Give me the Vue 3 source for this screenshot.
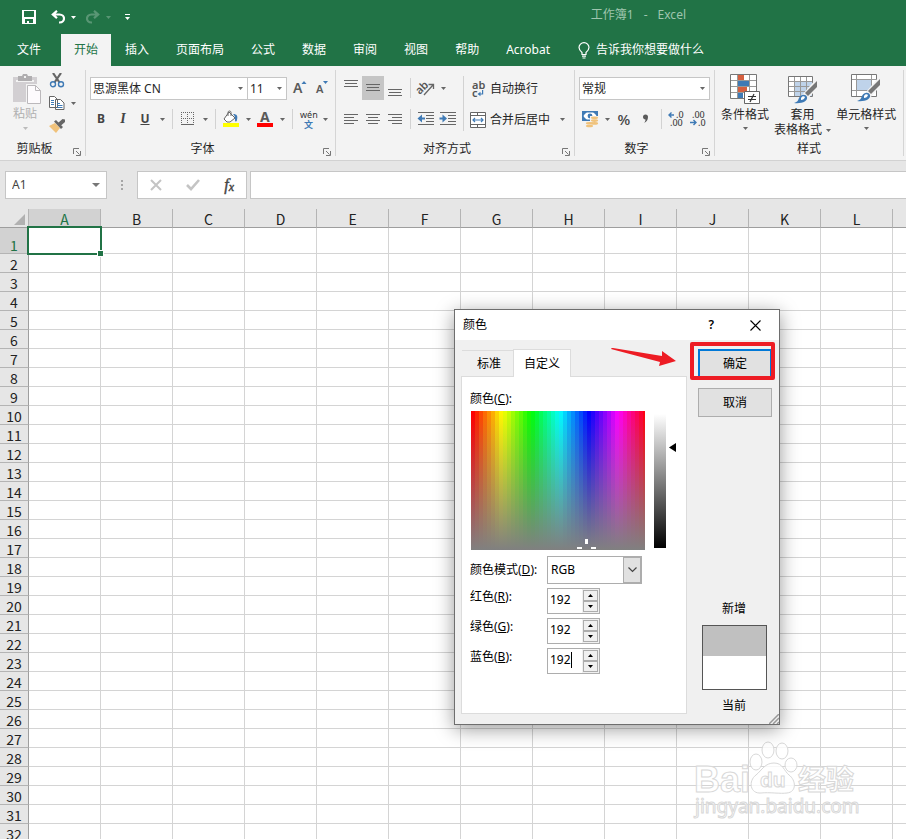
<script setup>
import { ref } from 'vue'

const tabs = ['插入', '页面布局', '公式', '数据', '审阅', '视图', '帮助', 'Acrobat']
const columns = [...'ABCDEFGHIJKL'.split(''), '']
const rows = Array.from({ length: 32 }, (_, i) => i + 1)

const vertical = [
  { name: '顶端对齐', y: 4 },
  { name: '垂直居中', y: 8, on: true },
  { name: '底端对齐', y: 13 },
]
const horizontal = [
  { name: '左对齐', x: [4, 4, 4, 4] },
  { name: '居中', x: [4, 6, 4, 6] },
  { name: '右对齐', x: [4, 8, 4, 8] },
]

const hues = Array.from({ length: 44 }, (_, i) => ({
  x: i * 4,
  fill: `hsl(${Math.round((i / 43.5) * 360)} 100% 50%)`,
}))

const channels = ref([
  { id: 'red', label: '红色', key: 'R', value: 192 },
  { id: 'green', label: '绿色', key: 'G', value: 192 },
  { id: 'blue', label: '蓝色', key: 'B', value: 192, caret: true },
])
const step = (c, d) => {
  c.value = Math.min(255, Math.max(0, Number(c.value) + d))
}
</script>

<template>
  <div class="app">
    <header class="top">
      <div class="titlebar">
        <button class="plain" aria-label="保存">
          <svg width="14" height="14" viewBox="0 0 14 14"><path fill="#fff" fill-rule="evenodd" d="M0 0h14v14H0zM2 1v6h10V1zM3 9v4h2v-2h2v2h4V9z" /></svg>
        </button>
        <button class="plain undo" aria-label="撤消">
          <svg width="14" height="14" viewBox="0 0 14 14"><path fill="none" stroke="#fff" stroke-width="2.200" d="M6 .8L1.800 4.500 6 8.200M2 4.500h6.500c3 0 4.500 2 4.500 4s-1.500 4-4.500 4H8" /></svg>
        </button>
        <button class="plain c1" aria-label="撤消选项"><svg width="5" height="3"><path fill="#fff" d="M0 0h5L2.500 3z" /></svg></button>
        <button class="plain c2 dim" aria-label="恢复">
          <svg width="14" height="14" viewBox="0 0 14 14"><path fill="none" stroke="#fff" stroke-width="2.200" d="M8 .8l4.200 3.700L8 8.200M12 4.500H5.500C2.500 4.500 1 6.500 1 8.500s1.500 4 4.500 4H6" /></svg>
        </button>
        <button class="plain c1 dim" aria-label="恢复选项"><svg width="5" height="3"><path fill="#fff" d="M0 0h5L2.500 3z" /></svg></button>
        <button class="plain c3" aria-label="自定义快速访问工具栏"><svg width="5" height="6"><path fill="#fff" d="M0 0h5v1H0zM0 3h5L2.500 6z" /></svg></button>
        <h1 class="doc"><span>工作簿1</span><span>-</span><span>Excel</span></h1>
      </div>
      <nav class="tabs">
        <button class="tab file">文件</button>
        <button class="tab active">开始</button>
        <button v-for="t in tabs" :key="t" class="tab">{{ t }}</button>
        <button class="tell">
          <svg width="12" height="17" viewBox="0 0 12 17" fill="none" stroke="#fff" stroke-width="1.200"><path d="M4 12.500v-2C2 8.800 1 7.500 1 5.600a5 5 0 0 1 10 0C11 7.500 10 8.800 8 10.500v2zM4 14.200h4M4.500 16h3" /></svg>
          <span>告诉我你想要做什么</span>
        </button>
      </nav>
    </header>

    <section class="ribbon">
      <div class="group g-clip">
        <div class="clip">
          <button class="paste">
            <svg width="28" height="30" viewBox="0 0 28 30">
              <path fill="#d2cfd2" d="M0 3h24v25H0z" /><path fill="#f3f3f3" d="M3 6h18v2H3z" />
              <path fill="#b0aeb0" d="M5 2h4l1-2h4l1 2h4v5H5z" /><path fill="#f3f3f3" d="M11 2h2v2h-2zM13 10h15v20H13z" />
              <path fill="#fdfbfd" stroke="#bbb8bb" d="M14.500 11.500h8l5 5v13h-13z" /><path fill="none" stroke="#bbb8bb" d="M22.500 11.500v5h5" />
            </svg>
            <span>粘贴</span>
            <svg width="5" height="3"><path fill="#bbb" d="M0 0h5L2.500 3z" /></svg>
          </button>
          <div class="clipcol">
            <button class="clipbtn" aria-label="剪切">
              <svg width="16" height="16" viewBox="0 0 16 16"><path stroke="#666" stroke-width="2.200" d="M4 0l6.500 9.500M12 0L5.500 9.500" /><g fill="none" stroke="#3f7ab5" stroke-width="1.400"><circle cx="4" cy="11.300" r="2.500" /><circle cx="12" cy="11.300" r="2.500" /></g></svg>
            </button>
            <button class="clipbtn" aria-label="复制">
              <svg width="16" height="16" viewBox="0 0 16 16"><g fill="#fff" stroke="#666"><path d="M.5 1.500h5l3 3v8h-8zM6.500 4.500h5l3.500 3.500v6.500H6.500z" /></g><path stroke="#3f7ab5" d="M2 5.500h3M2 7.500h3M2 9.500h3M8 8.500h3M8 10.500h5.500M8 12.500h5.500" /></svg>
              <svg class="caret" width="5" height="3"><path d="M0 0h5L2.500 3z" /></svg>
            </button>
            <button class="clipbtn" aria-label="格式刷">
              <svg width="16" height="16" viewBox="0 0 16 16"><path fill="#f0c27b" d="M0 9l6-3 5 5-4 5z" /><path fill="#666" d="M5 4.500L7 3l7 7-2 2zM9 6l4.500-4 2.500.5V5l-4 3.500z" /></svg>
            </button>
          </div>
        </div>
        <footer><span>剪贴板</span><button class="launch" aria-label="剪贴板设置"><svg width="8" height="8" viewBox="0 0 8 8"><path fill="none" stroke="#777" d="M.5 6V.5H6M3 3l3.500 3.500M7.500 3v4.500H3" /></svg></button></footer>
      </div>

      <div class="group g-font">
        <div class="rows">
          <div class="row">
            <label class="combo fontname"><select aria-label="字体"><option>思源黑体 CN</option></select><svg class="caret" width="5" height="3"><path d="M0 0h5L2.500 3z" /></svg></label>
            <label class="combo fontsize"><select aria-label="字号"><option>11</option></select><svg class="caret" width="5" height="3"><path d="M0 0h5L2.500 3z" /></svg></label>
            <button class="tool first" aria-label="增大字号"><svg viewBox="0 0 22 24"><text x="2" y="17" font-size="14" font-weight="600" fill="#5a5a5a">A</text><path fill="#3f7ab5" d="M10.500 8h5L13 5z" /></svg></button>
            <button class="tool" aria-label="减小字号"><svg viewBox="0 0 22 24"><text x="3" y="17" font-size="11" font-weight="600" fill="#5a5a5a">A</text><path fill="#3f7ab5" d="M10 5h5l-2.500 3z" /></svg></button>
          </div>
          <div class="row">
            <button class="tool glyph"><b>B</b></button>
            <button class="tool glyph it"><i>I</i></button>
            <button class="tool glyph"><u><b>U</b></u></button>
            <button class="drop" aria-label="下划线选项"><svg class="caret" width="5" height="3"><path d="M0 0h5L2.500 3z" /></svg></button>
            <i class="sep"></i>
            <button class="tool" aria-label="边框"><svg viewBox="0 0 22 24" shape-rendering="crispEdges"><path fill="none" stroke="#666" stroke-dasharray="1 1" d="M4 5.500h13M4 11.500h13M4.500 5v12M10.500 5v12M16.500 5v12" /><path stroke="#666" d="M4 17.500h13" /></svg></button>
            <button class="drop" aria-label="边框选项"><svg class="caret" width="5" height="3"><path d="M0 0h5L2.500 3z" /></svg></button>
            <i class="sep"></i>
            <button class="tool" aria-label="填充颜色"><svg viewBox="0 0 22 24"><path fill="#fff" stroke="#666" d="M9 5l6 6-5 4H7l-3-3z" /><path fill="none" stroke="#666" d="M8 9V5.500c0-2 3-2 3 0V9" /><path fill="#3f7ab5" d="M13 7c4 0 5 2 4 6-.5 2-2 2-2 0 0-3 0-4-2-6z" /><path fill="#ff0" d="M3 16h16v4H3z" /></svg></button>
            <button class="drop" aria-label="填充颜色选项"><svg class="caret" width="5" height="3"><path d="M0 0h5L2.500 3z" /></svg></button>
            <button class="tool" aria-label="字体颜色"><svg viewBox="0 0 22 24"><text x="6" y="15" font-size="14" font-weight="700" fill="#5a5a5a">A</text><path fill="#f00" d="M3 16h16v4H3z" /></svg></button>
            <button class="drop" aria-label="字体颜色选项"><svg class="caret" width="5" height="3"><path d="M0 0h5L2.500 3z" /></svg></button>
            <i class="sep"></i>
            <button class="tool" aria-label="拼音"><svg viewBox="0 0 22 24"><text x="3" y="11" font-size="9" fill="#333">wén</text><text x="7" y="21" font-size="9" font-weight="700" fill="#3f7ab5">文</text></svg></button>
            <button class="drop" aria-label="拼音选项"><svg class="caret" width="5" height="3"><path d="M0 0h5L2.500 3z" /></svg></button>
          </div>
        </div>
        <footer><span>字体</span><button class="launch" aria-label="字体设置"><svg width="8" height="8" viewBox="0 0 8 8"><path fill="none" stroke="#777" d="M.5 6V.5H6M3 3l3.500 3.500M7.500 3v4.500H3" /></svg></button></footer>
      </div>

      <div class="group g-align">
        <div class="pair">
          <div class="rows">
            <div class="row">
              <button v-for="a in vertical" :key="a.name" class="tool" :class="{ on: a.on }" :aria-label="a.name">
                <svg viewBox="0 0 22 24" fill="#666"><rect x="4" :y="a.y" width="14" height="1" /><rect x="5" :y="a.y + 3" width="12" height="1" /><rect x="4" :y="a.y + 6" width="14" height="1" /></svg>
              </button>
              <i class="sep"></i>
              <button class="tool" aria-label="方向"><svg viewBox="0 0 22 24"><text x="1" y="14" font-size="11" fill="#555" font-weight="600" transform="rotate(-45 9 12)">ab</text><path fill="none" stroke="#666" stroke-width="1.300" d="M9 19L18 9M13.500 8.500h5V13" /></svg></button>
              <button class="drop" aria-label="方向选项"><svg class="caret" width="5" height="3"><path d="M0 0h5L2.500 3z" /></svg></button>
            </div>
            <div class="row">
              <button v-for="h in horizontal" :key="h.name" class="tool" :aria-label="h.name">
                <svg viewBox="0 0 22 24" fill="#666"><rect v-for="(x, i) in h.x" :key="i" :x="x" :y="7 + i * 3" :width="i % 2 ? 10 : 14" height="1" /></svg>
              </button>
              <i class="sep"></i>
              <button class="tool" aria-label="减少缩进量"><svg viewBox="0 0 22 24"><path stroke="#666" d="M3 5.500h16M11 8.500h8M11 11.500h8M11 14.500h8M3 17.500h16" /><path fill="#3f7ab5" d="M2.500 11.500L7 7.500v3h3v2H7v3z" /></svg></button>
              <button class="tool" aria-label="增加缩进量"><svg viewBox="0 0 22 24"><path stroke="#666" d="M3 5.500h16M11 8.500h8M11 11.500h8M11 14.500h8M3 17.500h16" /><path fill="#3f7ab5" d="M10 11.500L5.500 7.500v3h-3v2h3v3z" /></svg></button>
            </div>
          </div>
          <i class="sep tall"></i>
          <div class="rows wide">
            <button class="wordy">
              <svg class="wrapicon" width="16" height="18" viewBox="0 0 16 18"><text x="2" y="9" font-size="11" font-weight="600" fill="#555">ab</text><text x="2" y="17" font-size="11" font-weight="600" fill="#555">c</text><path fill="#3f7ab5" d="M12 10h1.200v4.500H10.500v1.800L7.500 14l3-2.300v1.800H12z" /></svg>
              <span>自动换行</span>
            </button>
            <button class="wordy">
              <svg width="16" height="16" viewBox="0 0 16 16"><path fill="#fff" stroke="#666" d="M.5.5h15v15H.5zM.5 3.500h15M.5 12.500h15M7.500.5v3M7.500 12.500v3" /><path fill="none" stroke="#3f7ab5" stroke-width="1.200" d="M3 8h10M5 6L3 8l2 2M11 6l2 2-2 2" /></svg>
              <span>合并后居中</span>
              <svg class="caret" width="5" height="3"><path d="M0 0h5L2.500 3z" /></svg>
            </button>
          </div>
        </div>
        <footer><span>对齐方式</span><button class="launch" aria-label="对齐设置"><svg width="8" height="8" viewBox="0 0 8 8"><path fill="none" stroke="#777" d="M.5 6V.5H6M3 3l3.500 3.500M7.500 3v4.500H3" /></svg></button></footer>
      </div>

      <div class="group g-number">
        <div class="rows">
          <div class="row">
            <label class="combo numfmt"><select aria-label="数字格式"><option>常规</option></select><svg class="caret" width="5" height="3"><path d="M0 0h5L2.500 3z" /></svg></label>
          </div>
          <div class="row">
            <button class="tool" aria-label="会计数字格式"><svg viewBox="0 0 22 24"><path fill="#fff" stroke="#3f7ab5" stroke-width="1.600" d="M3.800 4.800h14.400v8.400H3.800z" /><path fill="#3f7ab5" d="M4 5h4L4 9zM18 5h-4l4 4zM4 13V9l4 4z" /><circle cx="11" cy="9" r="2.400" fill="#3f7ab5" /><path fill="#f3f3f3" d="M11 9h9v12h-9zM7 14h5v6H7z" /><g fill="#f0c27b"><ellipse cx="15.500" cy="10.800" rx="3.600" ry="1.300" /><ellipse cx="15.500" cy="13.600" rx="3.600" ry="1.300" /><ellipse cx="15.500" cy="16.400" rx="3.600" ry="1.300" /><ellipse cx="10.500" cy="16.200" rx="3.600" ry="1.300" /><ellipse cx="10.500" cy="19" rx="3.600" ry="1.300" /></g></svg></button>
            <button class="drop" aria-label="会计格式选项"><svg class="caret" width="5" height="3"><path d="M0 0h5L2.500 3z" /></svg></button>
            <button class="tool pct">%</button>
            <button class="tool" aria-label="千位分隔样式"><svg viewBox="0 0 22 24"><path fill="#5a5a5a" d="M8 10a2.500 2.500 0 1 1 5 0c0 3-1.500 5-4 6 1-1.200 1.500-2.200 1.500-3.500C9 12.500 8 11.500 8 10z" /></svg></button>
            <i class="sep"></i>
            <button class="tool" aria-label="增加小数位数"><svg viewBox="0 0 22 24"><text x="10" y="11" font-size="9" font-weight="500" fill="#444">.0</text><text x="4" y="19" font-size="9" font-weight="500" fill="#444">.00</text><path fill="none" stroke="#3f7ab5" stroke-width="1.400" d="M8 8H3M5.500 5.500L3 8l2.500 2.500" /></svg></button>
            <button class="tool" aria-label="减少小数位数"><svg viewBox="0 0 22 24"><text x="4" y="11" font-size="9" font-weight="500" fill="#444">.00</text><text x="10" y="19" font-size="9" font-weight="500" fill="#444">.0</text><path fill="none" stroke="#3f7ab5" stroke-width="1.400" d="M2 15.500h6M5.500 13L8 15.500 5.500 18" /></svg></button>
          </div>
        </div>
        <footer><span>数字</span><button class="launch" aria-label="数字设置"><svg width="8" height="8" viewBox="0 0 8 8"><path fill="none" stroke="#777" d="M.5 6V.5H6M3 3l3.500 3.500M7.500 3v4.500H3" /></svg></button></footer>
      </div>

      <div class="group g-style">
        <div class="bigs">
          <button class="big">
            <svg width="30" height="30" viewBox="0 0 30 30">
              <path fill="#fff" stroke="#777" d="M.5.5h26v24H.5z" />
              <path fill="#d65f3f" d="M8 1h6v5H8zM8 13h9v5H8z" /><path fill="#3f7ab5" d="M8 7h11v5H8zM8 19h5v5H8z" />
              <path stroke="#999" d="M1 6.500h25M1 12.500h25M1 18.500h25M7.500 1v23M19.500 1v23" />
              <path fill="#fff" stroke="#666" d="M14.500 17.500h15v12h-15z" /><path stroke="#333" stroke-width="1.200" d="M18 22.500h8M18 25.500h8M24 20l-4 8" />
            </svg>
            <span>条件格式</span>
            <svg class="caret" width="5" height="3"><path d="M0 0h5L2.500 3z" /></svg>
          </button>
          <button class="big">
            <svg width="30" height="30" viewBox="0 0 30 30">
              <path fill="#fff" stroke="#777" d="M.5 2.500h24v20H.5z" /><path fill="#bfd3ea" d="M7 8h17v14H7z" />
              <path stroke="#999" d="M1 7.500h23M1 12.500h23M1 17.500h23M6.500 3v19M12.500 3v19M18.500 3v19" />
              <path stroke="#f3f3f3" stroke-width="7" d="M29 9L17 23" /><path fill="#777" d="M29 7v6l-9 9-3-3z" /><path fill="#3f7ab5" d="M6 29c4-1 4-3 5-5 2-4 7-4 8-1 1 4-5 7-13 6z" /><path fill="#fff" d="M13 24c1-2 3-2 4-1-.5 2-2 3-4 3z" />
            </svg>
            <span>套用<br />表格格式 <svg class="caret inline" width="5" height="3"><path d="M0 0h5L2.500 3z" /></svg></span>
          </button>
          <button class="big">
            <svg width="30" height="30" viewBox="0 0 30 30">
              <path fill="#fff" stroke="#777" d="M.5.500h25v22H.5z" /><path stroke="#999" d="M1 5.500h24M1 16.500h24M5.500 1v21M20.500 1v21" />
              <path fill="#bfd3ea" d="M6 6h14v10H6z" />
              <path stroke="#f3f3f3" stroke-width="7" d="M29 7L17 21" /><path fill="#777" d="M29 5v6l-9 9-3-3z" /><path fill="#3f7ab5" d="M6 27c4-1 4-3 5-5 2-4 7-4 8-1 1 4-5 7-13 6z" /><path fill="#fff" d="M13 22c1-2 3-2 4-1-.5 2-2 3-4 3z" />
            </svg>
            <span>单元格样式</span>
            <svg class="caret" width="5" height="3"><path d="M0 0h5L2.500 3z" /></svg>
          </button>
        </div>
        <footer><span>样式</span></footer>
      </div>
    </section>

    <section class="formula">
      <div class="namebox">
        <input aria-label="名称框" value="A1" />
        <button class="plain" aria-label="名称列表"><svg width="8" height="4"><path fill="#777" d="M0 0h8L4 4z" /></svg></button>
      </div>
      <svg class="dots" width="2" height="10" fill="#a6a6a6"><path d="M0 0h2v2H0zM0 4h2v2H0zM0 8h2v2H0z" /></svg>
      <div class="fxbox">
        <button class="plain" aria-label="取消"><svg width="12" height="12" viewBox="0 0 12 12"><path stroke="#c4c4c4" stroke-width="2" d="M1 1l10 10M11 1L1 11" /></svg></button>
        <button class="plain" aria-label="输入"><svg width="14" height="12" viewBox="0 0 14 12"><path fill="none" stroke="#c4c4c4" stroke-width="2.600" d="M1 6l4 4 8-9" /></svg></button>
        <button class="plain fx" aria-label="插入函数"><i>f</i><i class="x">x</i></button>
      </div>
      <input class="fxinput" aria-label="编辑栏" />
    </section>

    <main class="sheet">
      <table>
        <thead>
          <tr>
            <th class="corner"><svg width="11" height="11"><path fill="#b1b1b1" d="M11 0v11H0z" /></svg></th>
            <th v-for="c in columns" :key="c" :class="{ sel: c === 'A' }">{{ c }}</th>
          </tr>
        </thead>
        <tbody>
          <tr v-for="r in rows" :key="r" :class="{ first: r === 1 }">
            <th :class="{ sel: r === 1 }">{{ r }}</th>
            <td v-for="c in columns" :key="c"><div v-if="r === 1 && c === 'A'" class="cursor"><i></i></div></td>
          </tr>
        </tbody>
      </table>
    </main>

    <svg class="watermark" width="180" height="84" viewBox="0 0 180 84" aria-hidden="true">
      <g fill="#fff" fill-opacity=".8" stroke="#d8d8d8" stroke-width="1">
        <text x="14" y="52" font-size="36" font-weight="700" class="latin">Bai</text>
        <path d="M94 23c9 0 10 8 15 12 7 5 8 17-2 18-6 1-18-1-26 0-11 1-13-12-5-18 6-5 9-12 18-12z" />
        <ellipse cx="76" cy="22" rx="6" ry="8" /><ellipse cx="88" cy="10" rx="6" ry="8" /><ellipse cx="102" cy="11" rx="6" ry="8" /><ellipse cx="111" cy="25" rx="6" ry="7" />
        <text x="80" y="47" font-size="21" font-weight="700" class="latin">du</text>
        <text x="118" y="50" font-size="28" font-weight="700">经验</text>
        <text x="15" y="73" font-size="19">jingyan.baidu.com</text>
      </g>
    </svg>

    <div class="dialog" role="dialog" aria-label="颜色">
      <div class="dtitle">
        <span>颜色</span>
        <button class="plain help" aria-label="帮助">?</button>
        <button class="plain" aria-label="关闭"><svg width="11" height="11" viewBox="0 0 11 11"><path stroke="#000" stroke-width="1.100" d="M.5.5l10 10M10.500.5l-10 10" /></svg></button>
      </div>
      <div class="dbody">
        <div class="left">
          <div class="dtabs"><button class="dtab">标准</button><button class="dtab cur">自定义</button></div>
          <div class="panel">
            <div class="plabel">颜色(<u>C</u>):</div>
            <div class="picker">
              <svg class="spectrum" width="174" height="139" shape-rendering="crispEdges">
                <defs><linearGradient id="fade" x1="0" y1="0" x2="0" y2="1"><stop offset="0" stop-color="#808080" stop-opacity="0" /><stop offset="1" stop-color="#808080" /></linearGradient></defs>
                <rect v-for="h in hues" :key="h.x" :x="h.x" y="0" width="4" height="139" :fill="h.fill" />
                <rect width="174" height="139" fill="url(#fade)" />
                <path fill="#fff" d="M114 128h3v5h-3zM106 136h5v2h-5zM120 136h5v2h-5z" />
              </svg>
              <div class="lum"></div>
              <svg class="pointer" width="7" height="9"><path d="M7 0v9L0 4.500z" /></svg>
            </div>
            <div class="field">
              <label for="mode">颜色模式(<u>D</u>):</label>
              <div class="mode">
                <select id="mode"><option>RGB</option></select>
                <span class="modebtn"><svg width="9" height="6" viewBox="0 0 9 6"><path fill="none" stroke="#444" stroke-width="1.200" d="M.5.500l4 4 4-4" /></svg></span>
              </div>
            </div>
            <div v-for="c in channels" :key="c.id" class="field chan">
              <label :for="c.id">{{ c.label }}(<u>{{ c.key }}</u>):</label>
              <div class="spin">
                <input :id="c.id" v-model="c.value" />
                <i v-if="c.caret" class="ibeam"></i>
                <div class="arrows">
                  <button aria-label="增加" @click="step(c, 1)"><svg width="5" height="3"><path d="M0 3h5L2.500 0z" /></svg></button>
                  <button aria-label="减少" @click="step(c, -1)"><svg width="5" height="3"><path d="M0 0h5L2.500 3z" /></svg></button>
                </div>
              </div>
            </div>
          </div>
        </div>
        <div class="right">
          <button class="dbtn ok">确定</button>
          <button class="dbtn">取消</button>
          <div class="preview">
            <span>新增</span>
            <div class="swatch"><i></i></div>
            <span>当前</span>
          </div>
        </div>
      </div>
      <div class="ring"></div>
      <svg class="arrow" width="66" height="22" viewBox="0 0 66 22"><path fill="#ed1c24" d="M0 1C0 0 1 0 2 0l49 8 0-5 14 10-17 5 1-4z" /></svg>
      <svg class="grip" width="10" height="10" viewBox="0 0 10 10"><path stroke="#999" stroke-width="1.500" d="M0 10L10 0M4 10l6-6M8 10l2-2" /></svg>
    </div>
  </div>
</template>

<style>
body {
  margin: 0;
  overflow: hidden;
}
</style>

<style scoped>
* {
  box-sizing: border-box;
}
.app {
  position: relative;
  display: flex;
  flex-direction: column;
  height: 100vh;
  overflow: hidden;
  background: #fff;
  color: #262626;
  font: 12px/16px "Noto Sans", "Noto Sans CJK SC", sans-serif;
}
button,
input,
select {
  font: inherit;
  color: inherit;
  margin: 0;
  padding: 0;
  border: 0;
  background: none;
  border-radius: 0;
  outline: 0;
}
select {
  appearance: none;
}
svg {
  display: block;
  flex: none;
}
.plain {
  display: flex;
  align-items: center;
  justify-content: center;
}
.caret {
  fill: #666;
}

.top {
  background: #217346;
  color: #fff;
}
.titlebar {
  display: flex;
  align-items: center;
  height: 34px;
  padding: 0 220px 0 22px;
}
.undo { margin-left: 15px; }
.c1 { margin-left: 6px; }
.c2 { margin-left: 10px; }
.c3 { margin-left: 14px; }
.dim { opacity: 0.25; }
.doc {
  display: flex;
  gap: 10px;
  margin: 0 0 4px auto;
  font-size: 12px;
  font-weight: 400;
  color: #9fc5ae;
}
.tabs {
  display: flex;
  gap: 1px;
  height: 32px;
  padding-left: 4px;
}
.tab {
  padding: 0 13px;
}
.file {
  margin-right: 6px;
}
.active {
  background: #f3f3f3;
  color: #217346;
}
.tell {
  display: flex;
  align-items: center;
  gap: 6px;
  padding-left: 14px;
}

.ribbon {
  display: flex;
  height: 95px;
  padding-top: 4px;
  background: #f3f3f3;
  border-bottom: 1px solid #d2d2d2;
}
.group {
  display: flex;
  flex-direction: column;
  flex: none;
  height: 86px;
  border-right: 1px solid #d5d5d5;
}
.g-clip { width: 86px; }
.g-font { width: 250px; }
.g-align { width: 239px; }
.g-number { width: 140px; }
.g-style { width: 189px; }
.group footer {
  display: flex;
  align-items: center;
  height: 14px;
  margin-top: auto;
}
.group footer span {
  flex: 1;
  text-align: center;
}
.launch {
  width: 16px;
  padding: 6px 0 0 4px;
}
.clip {
  display: flex;
  padding-left: 9px;
}
.paste {
  display: flex;
  flex-direction: column;
  align-items: center;
  width: 32px;
  padding-top: 4px;
  color: #b0b0b0;
}
.paste span {
  margin: 2px 0 5px;
}
.paste > svg:first-child {
  margin-left: 4px;
}
.clipcol {
  padding-left: 8px;
}
.clipbtn {
  display: flex;
  align-items: center;
  gap: 6px;
  height: 22px;
}
.rows {
  display: flex;
  flex-direction: column;
  gap: 7px;
  padding: 6px 0 0 4px;
}
.row {
  display: flex;
  align-items: center;
  height: 24px;
}
.tool {
  flex: none;
  width: 22px;
  height: 24px;
  color: #444;
}
.tool svg {
  width: 22px;
  height: 24px;
  overflow: visible;
}
.first {
  margin-left: 4px;
}
.tool.on {
  background: #c5c5c5;
}
.glyph b {
  font-weight: 700;
}
.it {
  font-family: "Liberation Serif", serif;
  font-weight: 700;
  font-size: 14px;
}
.pct {
  font-size: 15px;
  font-weight: 500;
}
.drop {
  display: flex;
  align-items: center;
  justify-content: center;
  width: 12px;
  height: 24px;
}
.sep {
  width: 1px;
  height: 20px;
  margin: 0 4px;
  background: #d2d2d2;
}
.combo {
  position: relative;
  display: block;
  height: 23px;
  border: 1px solid #c6c6c6;
  background: #fff;
}
.combo select {
  width: 100%;
  height: 21px;
  padding: 1px 0 0 2px;
}
.combo .caret {
  position: absolute;
  right: 4px;
  top: 9px;
}
.fontname { width: 158px; }
.fontsize {
  width: 40px;
  margin-left: -1px;
}
.numfmt { width: 131px; }
.pair {
  display: flex;
}
.sep.tall {
  height: 55px;
  margin: 6px 2px 0 4px;
}
.rows.wide {
  flex: 1;
}
.wordy {
  display: flex;
  align-items: center;
  gap: 4px;
  height: 24px;
  padding-top: 1px;
}
.wrapicon {
  overflow: visible;
}
.wordy .caret {
  margin-left: 6px;
}
.bigs {
  display: flex;
  gap: 5px;
  padding: 4px 6px 0;
}
.big {
  display: flex;
  flex-direction: column;
  align-items: center;
  white-space: nowrap;
  line-height: 15px;
}
.big span {
  margin: 3px 0 5px;
}
.big .inline {
  display: inline-block;
  margin-left: 1px;
  vertical-align: middle;
}

.formula {
  display: flex;
  height: 48px;
  padding: 10px 0 10px 5px;
  background: #e6e6e6;
  align-items: center;
}
.namebox,
.fxbox,
.fxinput {
  height: 28px;
  border: 1px solid #c6c6c6;
  background: #fff;
}
.namebox {
  display: flex;
  align-items: center;
  width: 102px;
  padding: 0 6px;
  color: #444;
}
.namebox input {
  flex: 1;
  min-width: 0;
}
.dots {
  margin: 0 14px;
}
.fxbox {
  display: flex;
  align-items: center;
  justify-content: space-between;
  width: 110px;
  margin-right: 3px;
  padding: 0 12px;
}
.fx {
  font: 16px/16px "Liberation Serif", serif;
  color: #444;
  -webkit-text-stroke: 0.4px #444;
}
.fx .x {
  font-size: 12px;
  padding-top: 3px;
}
.fxinput {
  flex: 1;
  min-width: 0;
  border-right: 0;
}

.sheet {
  flex: 1;
  min-height: 0;
  overflow: hidden;
}
table {
  table-layout: fixed;
  width: 965px;
  border-collapse: separate;
  border-spacing: 0;
  font: 14px/16px "Noto Sans CJK SC", sans-serif;
}
th,
td {
  width: 72px;
  height: 19px;
  padding: 0;
  border-right: 1px solid #d4d4d4;
  border-bottom: 1px solid #d4d4d4;
  font-weight: 400;
}
th {
  padding-top: 2px;
  background: #e6e6e6;
  border-color: #b4b4b4;
  color: #222;
}
thead th {
  border-bottom-color: #9e9e9e;
}
th:first-child {
  width: 29px;
  border-right-color: #9e9e9e;
}
th.corner {
  padding-top: 0;
  border-right-color: #b4b4b4;
}
.corner svg {
  margin: 2px 3px 0 auto;
}
tr.first th,
tr.first td {
  height: 26px;
  vertical-align: bottom;
}
th.sel {
  background: #d2d2d2;
  color: #217346;
}
td {
  position: relative;
}
.cursor {
  position: absolute;
  inset: -2px;
  border: 2px solid #217346;
  z-index: 1;
}
.cursor i {
  position: absolute;
  right: -4px;
  bottom: -4px;
  width: 7px;
  height: 7px;
  border: 1px solid #fff;
  background: #217346;
}

.watermark {
  position: absolute;
  left: 680px;
  top: 740px;
}
.latin {
  font-family: "Liberation Sans", sans-serif;
}

.dialog {
  position: absolute;
  left: 454px;
  top: 309px;
  width: 326px;
  border: 1px solid #6e6e6e;
  background: #f0f0f0;
  color: #000;
  box-shadow: 0 4px 18px rgba(0, 0, 0, 0.4);
}
.dtitle {
  display: flex;
  align-items: center;
  gap: 36px;
  height: 30px;
  padding: 0 18px 0 8px;
  background: #fff;
}
.dtitle span {
  margin-right: auto;
}
.help {
  font-weight: 600;
}
.dbody {
  display: flex;
  padding: 9px 7px 10px 6px;
}
.left {
  width: 226px;
}
.dtabs {
  display: flex;
  align-items: flex-end;
  height: 28px;
  margin-bottom: -1px;
  padding-left: 1px;
}
.dtab {
  width: 51px;
  height: 26px;
  margin-bottom: 1px;
  padding: 1px 0 0 3px;
  border-top: 1px solid #dcdcdc;
}
.dtab.cur {
  position: relative;
  width: 58px;
  height: 28px;
  margin: 0;
  padding: 0;
  border: 1px solid #dcdcdc;
  border-bottom: 0;
  background: #fff;
}
.panel {
  height: 338px;
  padding: 14px 0 0 8px;
  border: 1px solid #dcdcdc;
  background: #fff;
}
.plabel {
  height: 20px;
}
.picker {
  display: flex;
  padding-left: 1px;
}
.lum {
  width: 12px;
  height: 134px;
  margin: 3px 3px 0 9px;
  background: linear-gradient(#fff, #000);
}
.pointer {
  margin-top: 32px;
}
.field {
  display: flex;
  margin-top: 6px;
}
.field label {
  width: 77px;
  padding-top: 6px;
}
.chan {
  margin-top: 4px;
}
.chan label {
  padding-top: 1px;
}
.mode {
  position: relative;
  width: 95px;
  height: 28px;
  border: 1px solid #adadad;
}
.mode select {
  width: 100%;
  height: 26px;
  padding-left: 3px;
}
.modebtn {
  position: absolute;
  right: 0;
  top: 0;
  display: flex;
  align-items: center;
  justify-content: center;
  width: 18px;
  height: 26px;
  border: 1px solid #adadad;
  background: #e1e1e1;
  pointer-events: none;
}
.spin {
  position: relative;
  display: flex;
  width: 53px;
  height: 26px;
  border: 1px solid #adadad;
}
.spin input {
  width: 34px;
  height: 21px;
  padding-left: 2px;
}
.ibeam {
  position: absolute;
  left: 23px;
  top: 3px;
  width: 1px;
  height: 16px;
  background: #000;
}
.arrows {
  flex: 1;
  padding: 1px;
  background: #f0f0f0;
}
.arrows button {
  display: flex;
  align-items: center;
  justify-content: center;
  width: 15px;
  height: 11px;
  border: 1px solid #adadad;
}
.right {
  display: flex;
  flex-direction: column;
  flex: 1;
  padding-left: 11px;
}
.dbtn {
  height: 29px;
  margin-bottom: 10px;
  padding-top: 1px;
  border: 1px solid #adadad;
  background: #e1e1e1;
}
.ok {
  border: 2px solid #0078d7;
}
.preview {
  display: flex;
  flex-direction: column;
  align-items: center;
  gap: 8px;
  margin-top: auto;
  padding-right: 2px;
}
.swatch {
  width: 65px;
  height: 65px;
  border: 1px solid #555;
  background: #fff;
}
.swatch i {
  display: block;
  height: 30px;
  background: #c0c0c0;
}
.ring {
  position: absolute;
  right: 4px;
  top: 32px;
  width: 85px;
  height: 38px;
  border: 4px solid #ed1c24;
  border-radius: 2px;
  pointer-events: none;
}
.arrow {
  position: absolute;
  left: 156px;
  top: 38px;
}
.grip {
  position: absolute;
  right: 0;
  bottom: 0;
}
</style>
